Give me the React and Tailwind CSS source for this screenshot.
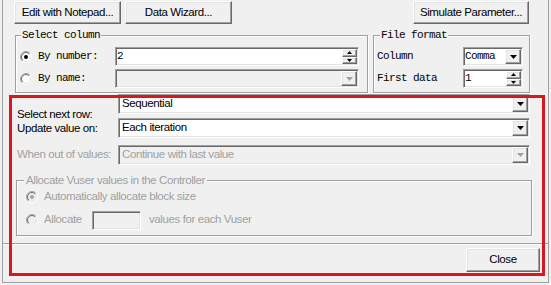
function Raised({ className = '', children }) {
  return (
    <div className={`flex items-center justify-center bg-[#f0f0f0] border border-t-white border-l-white border-b-[#696969] border-r-[#696969] shadow-[inset_-1px_-1px_0_#a0a0a0,inset_1px_1px_0_#e3e3e3] ${className}`}>
      {children}
    </div>
  );
}

function Field({ className = '', disabled, children }) {
  return (
    <div className={`flex items-stretch border border-t-[#a0a0a0] border-l-[#a0a0a0] border-b-white border-r-white shadow-[inset_1px_1px_0_#696969,inset_-1px_-1px_0_#e3e3e3] ${disabled ? 'bg-[#f0f0f0]' : 'bg-white'} ${className}`}>
      {children}
    </div>
  );
}

function Arrow({ up, small, color = '#000' }) {
  const w = small ? 5 : 7;
  const h = small ? 3 : 4;
  const pts = up ? `0,${h} ${w},${h} ${w / 2},0` : `0,0 ${w},0 ${w / 2},${h}`;
  return (
    <svg width={w} height={h} viewBox={`0 0 ${w} ${h}`}>
      <polygon points={pts} fill={color} />
    </svg>
  );
}

const mono = 'font-["Liberation_Mono",monospace] text-[11px] tracking-[-0.6px] whitespace-nowrap';

function Combo({ value, className = '', disabled, isMono }) {
  return (
    <Field className={className} disabled={disabled}>
      <span className={`flex-1 flex items-center overflow-hidden whitespace-nowrap ${disabled ? 'text-[#a0a0a0]' : 'text-black'} ${isMono ? `${mono} pl-[1px]` : 'pl-[3px]'}`}>
        {value}
      </span>
      <Raised className="w-[16px] my-[1px] mr-[1px]">
        <Arrow color={disabled ? '#a0a0a0' : '#000'} />
      </Raised>
    </Field>
  );
}

function Spin({ value, className = '' }) {
  return (
    <Field className={className}>
      <span className={`flex-1 flex items-center pl-[1px] ${mono}`}>{value}</span>
      <div className="flex flex-col w-[15px] my-[1px] mr-[1px]">
        <Raised className="flex-1"><Arrow up small /></Raised>
        <Raised className="flex-1"><Arrow small /></Raised>
      </div>
    </Field>
  );
}

function Radio({ checked, disabled }) {
  return (
    <svg width="12" height="12" viewBox="0 0 12 12" className="shrink-0">
      <defs>
        <linearGradient id="rOuter" x1="0" y1="0" x2="1" y2="1">
          <stop offset="0.5" stopColor="#a0a0a0" />
          <stop offset="0.5" stopColor="#ffffff" />
        </linearGradient>
        <linearGradient id="rInner" x1="0" y1="0" x2="1" y2="1">
          <stop offset="0.5" stopColor="#696969" />
          <stop offset="0.5" stopColor="#e3e3e3" />
        </linearGradient>
      </defs>
      <circle cx="6" cy="6" r="5.5" fill="none" stroke="url(#rOuter)" />
      <circle cx="6" cy="6" r="4.5" fill={disabled ? '#f0f0f0' : '#ffffff'} stroke="url(#rInner)" />
      {checked && <circle cx="6" cy="6" r="2" fill={disabled ? '#a0a0a0' : '#000'} />}
    </svg>
  );
}

function Group({ label, className = '', isMono, disabled, labelClass = '', children }) {
  return (
    <div className={`relative border border-[#a0a0a0] shadow-[inset_1px_1px_0_#ffffff,1px_1px_0_#ffffff] ${className}`}>
      <span className={`absolute bg-[#f0f0f0] whitespace-nowrap ${isMono ? `${mono} leading-[12px] -top-[7px] px-[1px]` : 'leading-[14px] -top-[8px] px-[2px]'} ${disabled ? 'text-[#a0a0a0]' : 'text-black'} ${labelClass}`}>
        {label}
      </span>
      {children}
    </div>
  );
}

export default function App() {
  return (
    <div className="relative w-[551px] h-[285px] overflow-hidden bg-[#f0f0f0] text-[11.5px] tracking-[-0.4px] text-black font-['Liberation_Sans',Arial,sans-serif]">
      <div className="ml-[2px] w-[547px] h-[283px] flex flex-col border-l border-r border-b border-[#a0a0a0]">
        {/* top buttons */}
        <div className="flex pt-[1px] pl-[11px] pr-[19px]">
          <Raised className="w-[107px] h-[23px]">Edit with Notepad...</Raised>
          <Raised className="w-[107px] h-[23px] ml-[4px]">Data Wizard...</Raised>
          <div className="flex-1" />
          <Raised className="w-[116px] h-[23px]">Simulate Parameter...</Raised>
        </div>

        {/* column / file format */}
        <div className="flex mt-[11px] pl-[12px] gap-[5px]">
          <Group label="Select column" isMono labelClass="left-[5px]" className="w-[353px] h-[58px]">
            <div className="flex flex-col pt-[11px] gap-[3px]">
              <div className="flex items-center">
                <div className="w-[99px] flex items-center pl-[4px] gap-[6px]">
                  <Radio checked />
                  <span className={mono}>By number:</span>
                </div>
                <Spin value="2" className="w-[244px] h-[19px]" />
              </div>
              <div className="flex items-center">
                <div className="w-[99px] flex items-center pl-[4px] gap-[6px]">
                  <Radio />
                  <span className={mono}>By name:</span>
                </div>
                <Combo value="" disabled className="w-[244px] h-[19px]" />
              </div>
            </div>
          </Group>

          <Group label="File format" isMono labelClass="left-[6px]" className="w-[157px] h-[58px]">
            <div className="flex flex-col pt-[11px] gap-[3px]">
              <div className="flex items-center">
                <span className={`w-[89px] pl-[3px] ${mono}`}>Column</span>
                <Combo value="Comma" isMono className="w-[60px] h-[19px]" />
              </div>
              <div className="flex items-center">
                <span className={`w-[89px] pl-[3px] ${mono}`}>First data</span>
                <Spin value="1" className="w-[60px] h-[19px]" />
              </div>
            </div>
          </Group>
        </div>

        {/* row selection */}
        <div className="flex mt-[1px] pl-[14px]">
          <div className="w-[101px] pt-[13px] leading-[14px] whitespace-nowrap">
            <div>Select next row:</div>
            <div>Update value on:</div>
          </div>
          <div className="w-[412px] flex flex-col gap-[4px]">
            <Combo value="Sequential" className="h-[20px]" />
            <Combo value="Each iteration" className="h-[20px]" />
          </div>
        </div>

        <div className="flex items-center mt-[7px] pl-[14px]">
          <span className="w-[101px] text-[#a0a0a0] whitespace-nowrap">When out of values:</span>
          <Combo value="Continue with last value" disabled className="w-[412px] h-[20px]" />
        </div>

        {/* allocate */}
        <Group label="Allocate Vuser values in the Controller" disabled labelClass="left-[7px]" className="mt-[15px] ml-[13px] w-[516px] h-[56px]">
          <div className="flex flex-col pt-[8px] pl-[9px] gap-[5px] text-[#a0a0a0]">
            <div className="flex items-center h-[16px] gap-[6px]">
              <Radio checked disabled />
              <span className="whitespace-nowrap">Automatically allocate block size</span>
            </div>
            <div className="flex items-center h-[20px]">
              <Radio disabled />
              <span className="w-[48px] ml-[6px] whitespace-nowrap">Allocate</span>
              <Field disabled className="w-[49px] h-[19px]" />
              <span className="ml-[8px] whitespace-nowrap">values for each Vuser</span>
            </div>
          </div>
        </Group>

        <div className="mt-[7px] h-[2px] border-t border-b border-t-[#a0a0a0] border-b-white" />

        <Raised className="self-end mt-[3px] mr-[8px] w-[74px] h-[24px]">Close</Raised>
      </div>

      {/* annotation */}
      <div className="absolute left-[9px] top-[95px] w-[536px] h-[181px] border-[3px] border-[#d7191f]" />
    </div>
  );
}
